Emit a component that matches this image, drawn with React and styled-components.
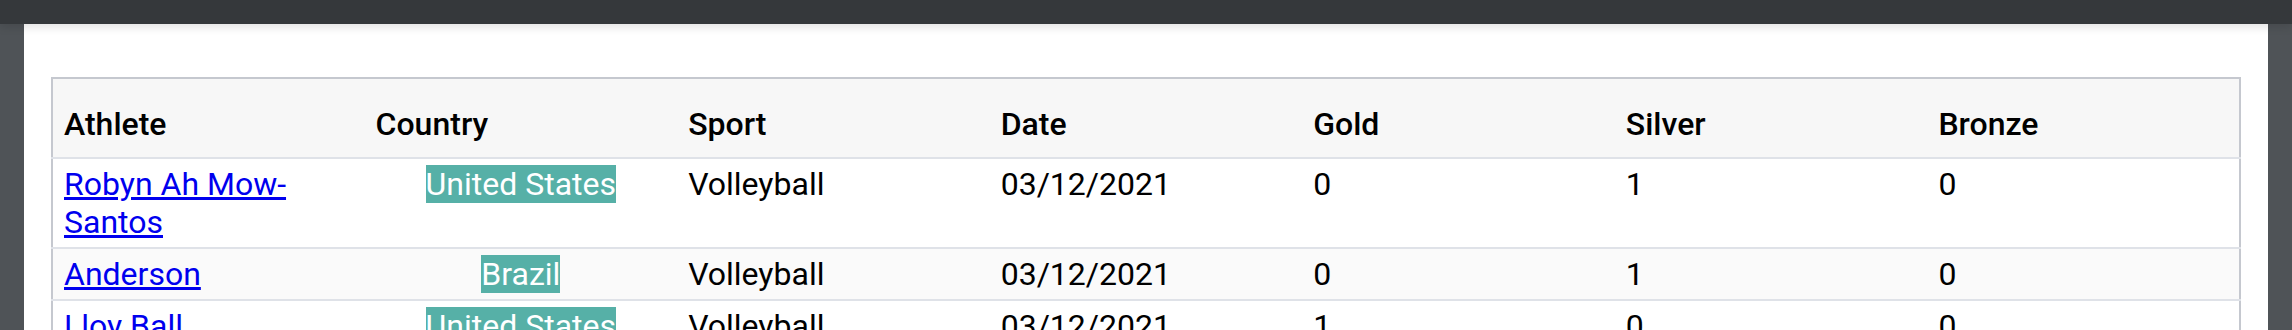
import React from "react";
import styled, { createGlobalStyle } from "styled-components";

const GlobalStyle = createGlobalStyle`
  html, body {
    margin: 0;
    padding: 0;
    background: #4f5357;
    font-family: Roboto, "Noto Sans", Arial, sans-serif;
  }
`;

const Page = styled.div`
  display: flex;
  flex-direction: column;
  min-height: 330px;
`;

const TopBar = styled.div`
  height: 24px;
  background: #35383b;
  position: relative;
  z-index: 1;
  box-shadow: 0 3px 10px rgba(0, 0, 0, 0.12);
`;

const Panel = styled.main`
  flex: 1;
  margin: 0 24px;
  background: #ffffff;
  padding: 53px 27px 0;
`;

const Table = styled.table`
  width: 100%;
  table-layout: fixed;
  border-collapse: collapse;
  border: 2px solid #c5c8cf;
  font-size: 32px;
  color: #000;
`;

const HeadCell = styled.th`
  text-align: left;
  font-weight: 500;
  padding: 26px 11px 14px;
  background: #f7f7f7;
  border-bottom: 2px solid #dfe2e8;
  line-height: normal;
`;

const Row = styled.tr`
  background: ${(p) => (p.$striped ? "#fafafa" : "#ffffff")};
`;

const Cell = styled.td`
  padding: 6px 11px;
  vertical-align: top;
  text-align: ${(p) => (p.$center ? "center" : "left")};
  border-bottom: 2px solid #dfe2e8;
  font-weight: 400;
  line-height: normal;
`;

const AthleteLink = styled.a`
  color: #0000ee;
  text-decoration: underline;
`;

const CountryTag = styled.span`
  background: #56b0a7;
  color: #ffffff;
`;

const columns = ["Athlete", "Country", "Sport", "Date", "Gold", "Silver", "Bronze"];

const rows = [
  { athlete: "Robyn Ah Mow-Santos", country: "United States", sport: "Volleyball", date: "03/12/2021", gold: 0, silver: 1, bronze: 0 },
  { athlete: "Anderson", country: "Brazil", sport: "Volleyball", date: "03/12/2021", gold: 0, silver: 1, bronze: 0 },
  { athlete: "Lloy Ball", country: "United States", sport: "Volleyball", date: "03/12/2021", gold: 1, silver: 0, bronze: 0 },
];

export default function App() {
  return (
    <>
      <GlobalStyle />
      <Page>
        <TopBar />
        <Panel>
          <Table>
            <thead>
              <tr>
                {columns.map((c) => (
                  <HeadCell key={c}>{c}</HeadCell>
                ))}
              </tr>
            </thead>
            <tbody>
              {rows.map((r, i) => (
                <Row key={r.athlete} $striped={i % 2 === 1}>
                  <Cell>
                    <AthleteLink href="#">{r.athlete}</AthleteLink>
                  </Cell>
                  <Cell $center>
                    <CountryTag>{r.country}</CountryTag>
                  </Cell>
                  <Cell>{r.sport}</Cell>
                  <Cell>{r.date}</Cell>
                  <Cell>{r.gold}</Cell>
                  <Cell>{r.silver}</Cell>
                  <Cell>{r.bronze}</Cell>
                </Row>
              ))}
            </tbody>
          </Table>
        </Panel>
      </Page>
    </>
  );
}
